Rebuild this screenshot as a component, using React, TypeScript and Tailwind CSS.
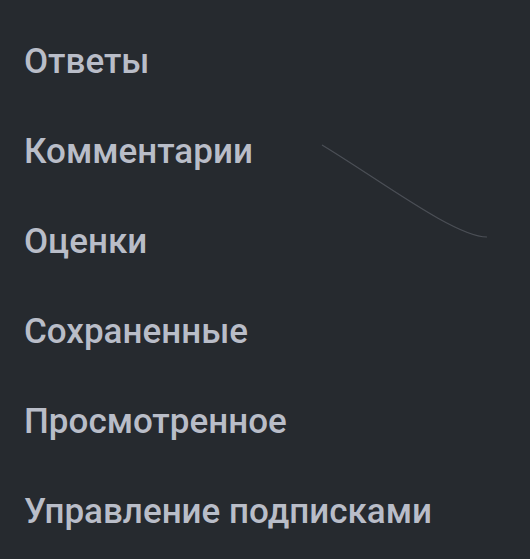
import React from 'react';

const ITEMS = [
  'Ответы',
  'Комментарии',
  'Оценки',
  'Сохраненные',
  'Просмотренное',
  'Управление подписками',
];

function App() {
  return (
    <div className="relative w-[530px] h-[559px] overflow-hidden bg-[#262a2f] font-['Roboto',sans-serif]">
      <svg
        className="absolute left-0 top-0 pointer-events-none"
        width="530"
        height="559"
        viewBox="0 0 530 559"
        fill="none"
      >
        <path d="M322 145 C 380 180, 455 237, 487 237" stroke="#4b4f56" strokeWidth="1.2" />
      </svg>
      <ul className="relative pt-4 flex flex-col">
        {ITEMS.map(label => (
          <li key={label} className="h-[90px] flex items-center pl-6">
            <span className="text-[35px] font-medium text-[#b9bdc8] leading-none">{label}</span>
          </li>
        ))}
      </ul>
    </div>
  );
}

export default App;
